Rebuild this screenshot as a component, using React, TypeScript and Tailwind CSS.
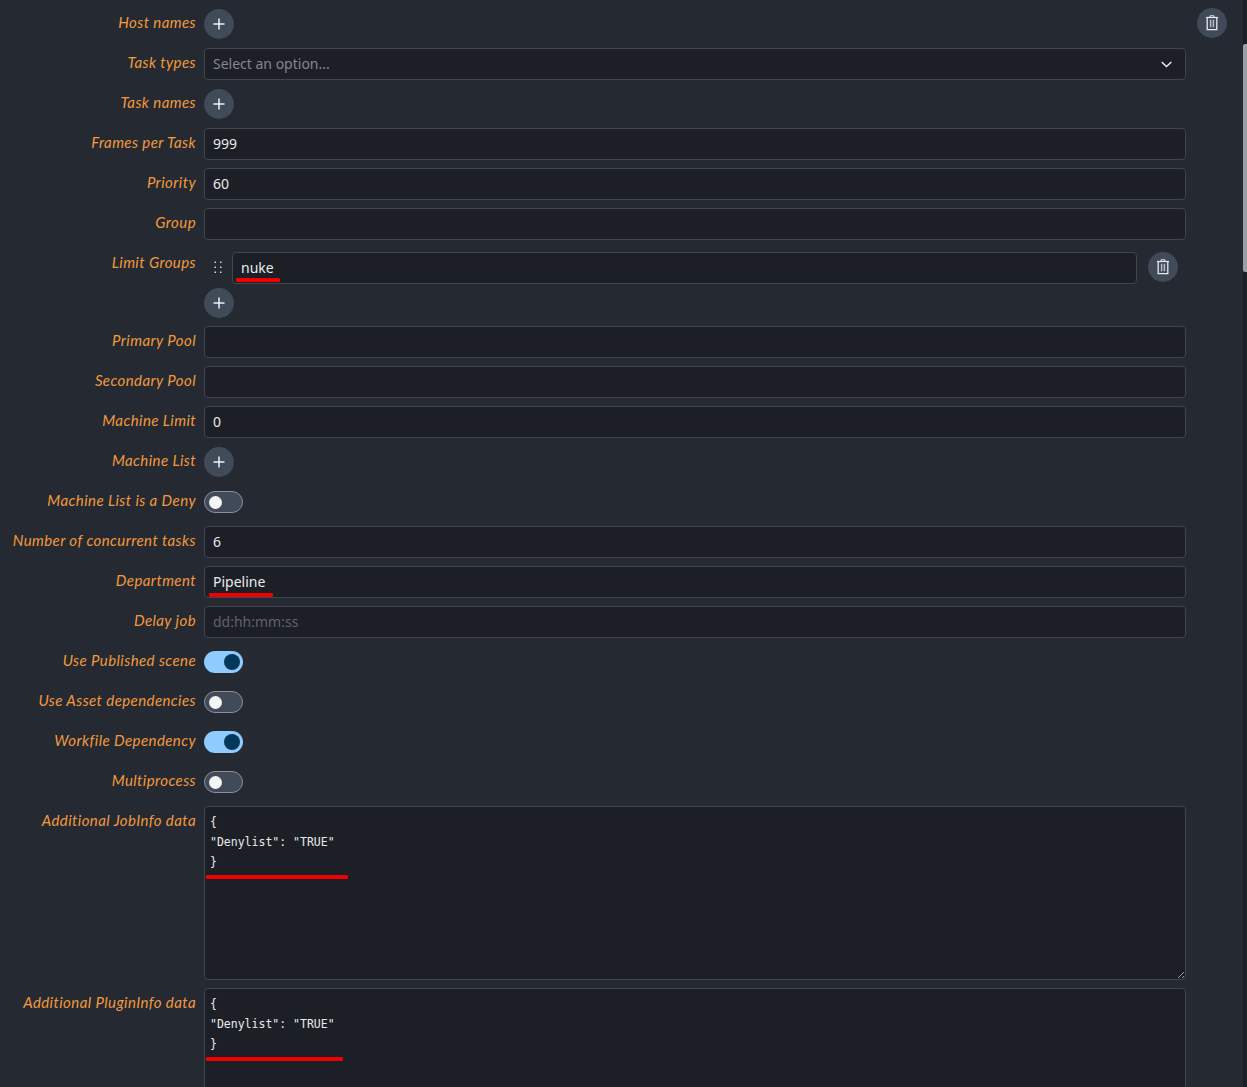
import React from 'react';

function Row({ label, children }: { label: string; children: React.ReactNode }) {
  return (
    <div className="flex items-start gap-2">
      <label className="w-[196px] shrink-0 pb-[3px] text-right text-[15px] leading-[29px] italic tracking-[0.42px] text-[#f29a3c] whitespace-nowrap [font-family:'Lato',sans-serif]">
        {label}
      </label>
      <div className="flex-1 min-w-0">{children}</div>
    </div>
  );
}

function RedMark({ className }: { className: string }) {
  return <div className={`absolute rounded-[1px] bg-[#f00000] ${className}`} />;
}

function TextInput({ value, placeholder }: { value?: string; placeholder?: string }) {
  return (
    <input
      readOnly
      value={value ?? ''}
      placeholder={placeholder}
      className="block h-[32px] w-full rounded-[4px] border border-[#41454f] bg-[#1c1f26] px-2 pb-[2px] text-[14px] text-[#e9eaec] outline-none placeholder:text-[#5f636a]"
    />
  );
}

function PlusButton() {
  return (
    <button className="flex h-[30px] w-[30px] items-center justify-center rounded-full bg-[#414a59]">
      <svg width="12" height="12" viewBox="0 0 12 12" fill="none" stroke="#eef0f3" strokeWidth="1.5">
        <path d="M6 0.5V11.5M0.5 6H11.5" />
      </svg>
    </button>
  );
}

function TrashIcon() {
  return (
    <svg width="14" height="16" viewBox="0 0 14 16" fill="none" stroke="#e8eaee">
      <path d="M1 2.5H13" strokeWidth="1.2" />
      <path d="M5 2V0.8H9V2" strokeWidth="1" />
      <path d="M2.2 2.5V14.6H11.8V2.5" strokeWidth="1.3" />
      <path d="M5.6 4.8V12.2M8.4 4.8V12.2" strokeWidth="1.5" stroke="#b9bdc5" />
    </svg>
  );
}

function TrashButton() {
  return (
    <button className="flex h-[30px] w-[30px] items-center justify-center rounded-full bg-[#414a59]">
      <TrashIcon />
    </button>
  );
}

function Toggle({ on }: { on?: boolean }) {
  if (on) {
    return (
      <div className="flex h-[22px] w-[39px] items-center justify-end rounded-full bg-[#8fcbff] pr-[3px]">
        <div className="h-[16px] w-[16px] rounded-full bg-[#03385a]" />
      </div>
    );
  }
  return (
    <div className="flex h-[22px] w-[39px] items-center rounded-full border border-[#8b9099] bg-[#414a59] pl-[4px]">
      <div className="h-[13px] w-[13px] rounded-full bg-[#f4f5f6]" />
    </div>
  );
}

function ToggleRow({ label, on }: { label: string; on?: boolean }) {
  return (
    <Row label={label}>
      <div className="flex h-[32px] items-center">
        <Toggle on={on} />
      </div>
    </Row>
  );
}

function PlusRow({ label }: { label: string }) {
  return (
    <Row label={label}>
      <div className="flex h-[32px] items-start pt-[1px]">
        <PlusButton />
      </div>
    </Row>
  );
}

const json = '{\n"Denylist": "TRUE"\n}';

function JsonArea({ markClass }: { markClass: string }) {
  return (
    <div className="relative">
      <textarea
        readOnly
        value={json}
        className="block h-[174px] w-full rounded-[4px] border border-[#41454f] bg-[#1c1f26] px-[5px] pt-[5px] text-[11.5px] leading-[20px] text-[#e9eaec] outline-none [font-family:'DejaVu_Sans_Mono',monospace]"
      />
      <RedMark className={markClass} />
    </div>
  );
}

export default function App() {
  return (
    <div className="flex h-screen overflow-hidden bg-[#252931] [font-family:'Noto_Sans',sans-serif]">
      <main className="relative flex-1 min-w-0 overflow-hidden pt-[8px]">
        <div className="absolute right-[16px] top-[8px]">
          <TrashButton />
        </div>
        <div className="flex w-[1186px] flex-col gap-2">
          <PlusRow label="Host names" />
          <Row label="Task types">
            <div className="flex h-[32px] items-center justify-between rounded-[4px] border border-[#41454f] bg-[#1c1f26] pl-2 pr-[13px]">
              <span className="pb-[2px] text-[14px] text-[#84878d]">Select an option...</span>
              <svg width="11" height="7" viewBox="0 0 11 7" fill="none" stroke="#eef0f3" strokeWidth="1.4">
                <path d="M0.7 1L5.5 5.6L10.3 1" />
              </svg>
            </div>
          </Row>
          <PlusRow label="Task names" />
          <Row label="Frames per Task"><TextInput value="999" /></Row>
          <Row label="Priority"><TextInput value="60" /></Row>
          <Row label="Group"><TextInput /></Row>
          <Row label="Limit Groups">
            <div className="flex flex-col gap-[4px] pt-[4px]">
              <div className="flex items-start pr-2">
                <div className="flex h-[30px] w-[28px] shrink-0 items-center justify-center">
                  <svg width="8" height="12" viewBox="0 0 8 12" fill="#d5d7db">
                    <rect x="0.5" y="0.5" width="1.5" height="1.5" />
                    <rect x="6" y="0.5" width="1.5" height="1.5" />
                    <rect x="0.5" y="5.5" width="1.5" height="1.5" />
                    <rect x="6" y="5.5" width="1.5" height="1.5" />
                    <rect x="0.5" y="10.5" width="1.5" height="1.5" />
                    <rect x="6" y="10.5" width="1.5" height="1.5" />
                  </svg>
                </div>
                <div className="relative flex-1">
                  <TextInput value="nuke" />
                  <RedMark className="left-[4px] top-[26px] h-[4px] w-[44px]" />
                </div>
                <div className="ml-[11px]"><TrashButton /></div>
              </div>
              <PlusButton />
            </div>
          </Row>
          <Row label="Primary Pool"><TextInput /></Row>
          <Row label="Secondary Pool"><TextInput /></Row>
          <Row label="Machine Limit"><TextInput value="0" /></Row>
          <PlusRow label="Machine List" />
          <ToggleRow label="Machine List is a Deny" />
          <Row label="Number of concurrent tasks"><TextInput value="6" /></Row>
          <Row label="Department">
            <div className="relative">
              <TextInput value="Pipeline" />
              <RedMark className="left-[5px] top-[27px] h-[4px] w-[64px]" />
            </div>
          </Row>
          <Row label="Delay job"><TextInput placeholder="dd:hh:mm:ss" /></Row>
          <ToggleRow label="Use Published scene" on />
          <ToggleRow label="Use Asset dependencies" />
          <ToggleRow label="Workfile Dependency" on />
          <ToggleRow label="Multiprocess" />
          <Row label="Additional JobInfo data">
            <JsonArea markClass="left-[2px] top-[69px] h-[4px] w-[142px]" />
          </Row>
          <Row label="Additional PluginInfo data">
            <JsonArea markClass="left-[2px] top-[69px] h-[4px] w-[137px]" />
          </Row>
        </div>
      </main>
      <div className="w-[4px] shrink-0 bg-[#1c1f26]">
        <div className="mt-[44px] h-[228px] rounded-l-[2px] bg-[#9a9fa8]" />
      </div>
    </div>
  );
}
